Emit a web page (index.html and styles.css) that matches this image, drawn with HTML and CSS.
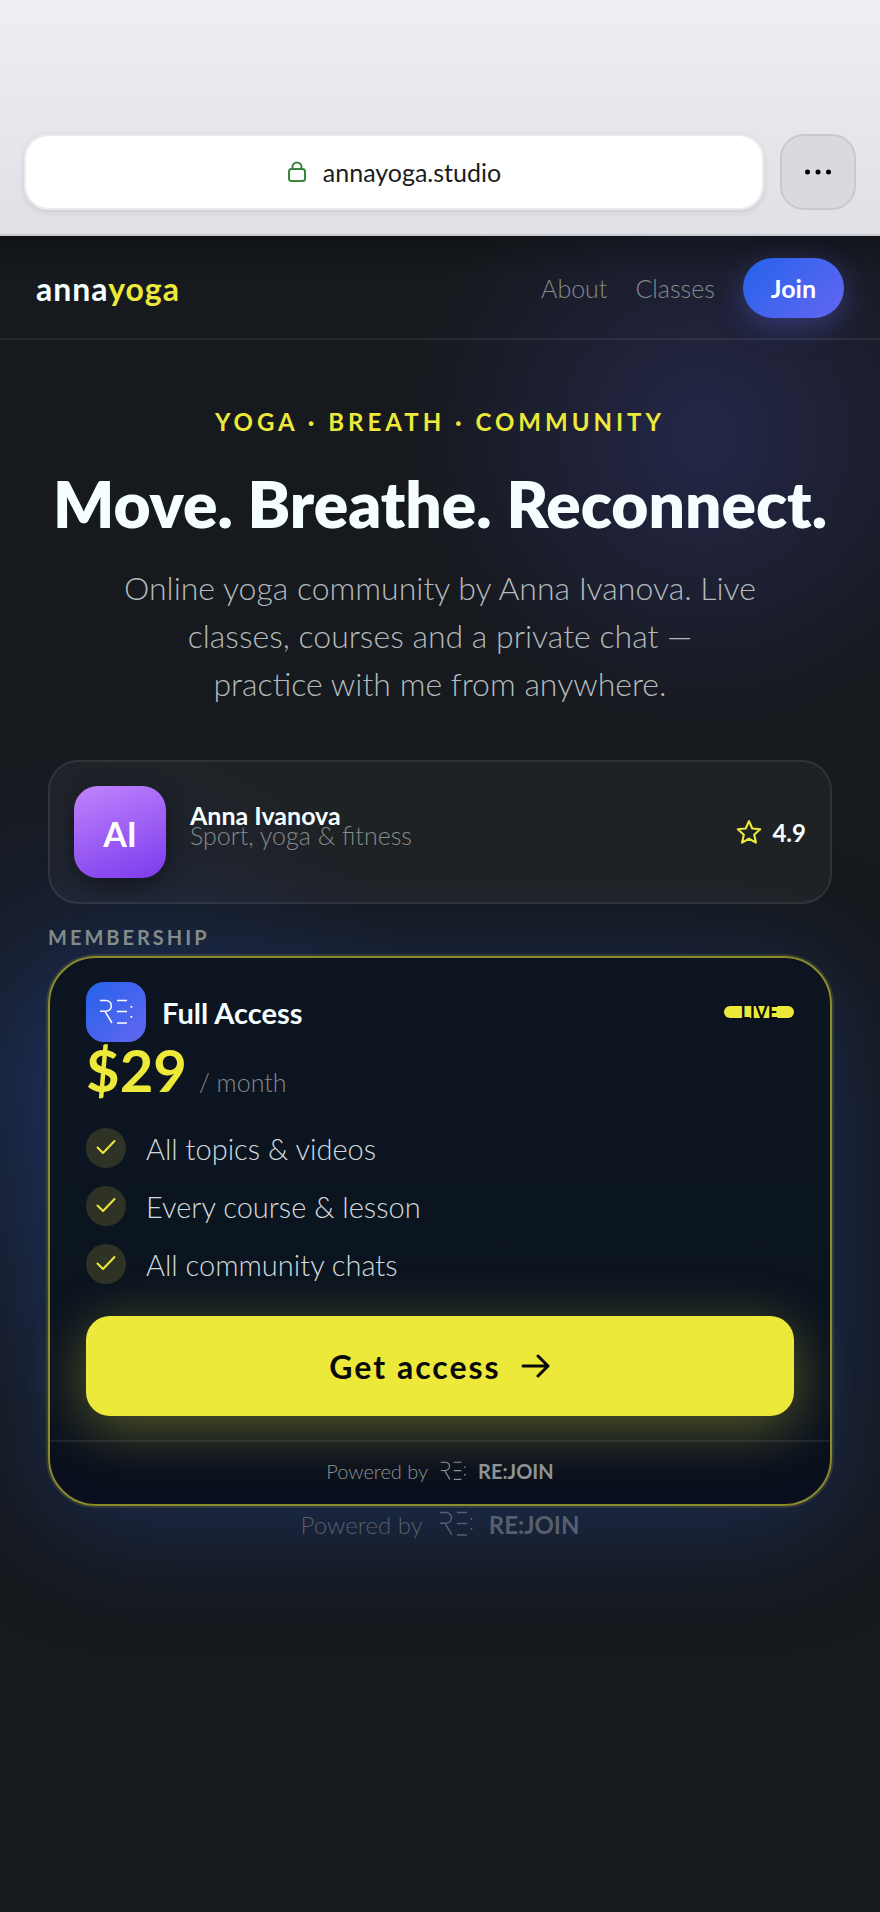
FILE: index.html
```html
<!DOCTYPE html>
<html lang="en">
<head>
  <meta charset="utf-8">
  <meta name="viewport" content="width=device-width, initial-scale=1">
  <title>Anna Yoga</title>
  <link rel="stylesheet" href="styles.css">
</head>
<body>
  <svg class="defs" aria-hidden="true">
    <symbol id="re-logo" viewBox="0 0 34 26">
      <path d="M1 1.5H7A5.4 5.4 0 0 1 7 12.3H1M6 12.3L13 24M18 1.5H28M18 12.5H28M18 24H28" fill="none" stroke="currentColor" stroke-width="1.5"/>
      <path d="M31.5 7h1.8v1.8h-1.8zM31.5 17h1.8v1.8h-1.8z" fill="currentColor"/>
    </symbol>
    <symbol id="check" viewBox="0 0 24 24">
      <path d="M3.500 11.500l5.500 5.500L20.500 5" fill="none" stroke="currentColor" stroke-width="2" stroke-linecap="round" stroke-linejoin="round"/>
    </symbol>
  </svg>

  <div class="browser-bar">
    <div class="address">
      <svg class="lock" viewBox="0 0 20 22" aria-hidden="true">
        <rect x="2" y="8" width="16" height="12" rx="2.500"/>
        <path d="M5.500 8V6a4.500 4.500 0 0 1 9 0v2"/>
      </svg>
      <span>annayoga.studio</span>
    </div>
    <button class="menu-button" aria-label="More">
      <svg viewBox="0 0 28 8" aria-hidden="true">
        <circle cx="3.500" cy="4" r="2.500"/><circle cx="14" cy="4" r="2.500"/><circle cx="24.500" cy="4" r="2.500"/>
      </svg>
    </button>
  </div>

  <div class="page">
    <header class="nav">
      <a class="brand" href="#">anna<span>yoga</span></a>
      <nav class="links">
        <a href="#about">About</a>
        <a href="#classes">Classes</a>
        <button class="join">Join</button>
      </nav>
    </header>

    <main class="content">
      <section class="hero">
        <p class="eyebrow">YOGA · BREATH · COMMUNITY</p>
        <h1>Move. Breathe. Reconnect.</h1>
        <p class="lead">Online yoga community by Anna Ivanova. Live classes, courses and a private chat —<br> practice with me from anywhere.</p>
      </section>

      <section class="author">
        <div class="avatar">AI</div>
        <div class="author-text">
          <p class="author-name">Anna Ivanova</p>
          <p class="author-topic">Sport, yoga &amp; fitness</p>
        </div>
        <div class="rating">
          <svg viewBox="0 0 24 24" aria-hidden="true">
            <path d="M12 2l3 6.800 7.300.7-5.500 5 1.600 7.300L12 18.200l-6.400 3.600 1.600-7.300-5.500-5 7.300-.7z"/>
          </svg>
          <span>4.9</span>
        </div>
      </section>

      <h2 class="label">MEMBERSHIP</h2>

      <section class="plan">
        <div class="plan-body">
          <div class="plan-head">
            <div class="plan-icon"><svg class="logo"><use href="#re-logo"/></svg></div>
            <h3>Full Access</h3>
            <span class="live">LIVE</span>
          </div>
          <div class="price"><strong>$29</strong><span>/ month</span></div>
          <ul class="features">
            <li><span class="tick"><svg><use href="#check"/></svg></span>All topics &amp; videos</li>
            <li><span class="tick"><svg><use href="#check"/></svg></span>Every course &amp; lesson</li>
            <li><span class="tick"><svg><use href="#check"/></svg></span>All community chats</li>
          </ul>
          <button class="access">
            Get access
            <svg viewBox="0 0 30 24" aria-hidden="true"><path d="M2 12h25M17 2l10 10-10 10"/></svg>
          </button>
        </div>
        <div class="powered">Powered by <svg class="logo logo-small"><use href="#re-logo"/></svg> <b>RE:JOIN</b></div>
      </section>

      <footer class="powered powered-page">Powered by <svg class="logo"><use href="#re-logo"/></svg> <b>RE:JOIN</b></footer>
    </main>
  </div>
</body>
</html>
```
FILE: styles.css
```css
* {
  box-sizing: border-box;
  margin: 0;
  padding: 0;
}

body {
  display: flex;
  flex-direction: column;
  min-height: 100vh;
  font-family: Lato, sans-serif;
  font-weight: 300;
  font-size: 25px;
  color: #f5ffff;
  background-color: #16191d;
}

a {
  color: inherit;
  text-decoration: none;
}

button {
  font: inherit;
  border: none;
  cursor: pointer;
}

.defs {
  position: absolute;
  width: 0;
  height: 0;
}

/* browser bar */
.browser-bar {
  display: flex;
  gap: 16px;
  padding: 134px 24px 24px;
  background: linear-gradient(#eeeff3, #e0e0e6);
  border-bottom: 2px solid #c9cacf;
}

.address {
  flex: 1;
  display: flex;
  align-items: center;
  justify-content: center;
  gap: 16px;
  height: 76px;
  border: 2px solid #ebebed;
  border-radius: 24px;
  background-color: white;
  background-clip: padding-box;
  box-shadow: 0 2px 6px rgba(0, 0, 0, 0.1);
  color: #1c1c1e;
  font-weight: 400;
}

.lock {
  width: 20px;
  height: 22px;
  fill: none;
  stroke: #3a843d;
  stroke-width: 2;
}

.menu-button {
  display: flex;
  align-items: center;
  justify-content: center;
  width: 76px;
  height: 76px;
  border: 2px solid #c9cace;
  border-radius: 24px;
  background-color: #d9dadf;
}

.menu-button svg {
  width: 28px;
  height: 8px;
}

/* page */
.page {
  flex: 1;
  background:
    linear-gradient(rgba(0, 0, 0, 0.25), transparent 40px),
    radial-gradient(circle 300px at 80% 200px, rgba(79, 80, 200, 0.25), transparent),
    radial-gradient(circle 340px at 10% 840px, rgba(37, 80, 180, 0.2), transparent);
}

.nav {
  display: flex;
  justify-content: space-between;
  align-items: center;
  padding: 22px 36px 20px;
  border-bottom: 2px solid rgba(255, 255, 255, 0.07);
}

.brand {
  font-size: 32px;
  font-weight: 700;
  letter-spacing: 1px;
}

.brand span {
  color: #ece93a;
}

.links {
  display: flex;
  align-items: center;
  gap: 28px;
  color: #838b8b;
}

.join {
  height: 60px;
  padding: 0 28px;
  border-radius: 30px;
  background: linear-gradient(135deg, #2563eb, #6366f1);
  box-shadow: 0 8px 28px rgba(99, 102, 241, 0.35);
  color: white;
  font-weight: 700;
}

.content {
  padding: 64px 48px;
}

.hero {
  margin-bottom: 52px;
  text-align: center;
}

.eyebrow {
  color: #ece93a;
  font-size: 24px;
  font-weight: 700;
  letter-spacing: 4px;
  line-height: 36px;
}

h1 {
  margin: 24px 0 20px;
  font-size: 64px;
  font-weight: 800;
  line-height: 80px;
}

.lead {
  max-width: 640px;
  margin: 0 auto;
  font-size: 32px;
  line-height: 48px;
  color: #b4babc;
}

.author {
  display: flex;
  align-items: center;
  gap: 24px;
  padding: 24px;
  border: 2px solid rgba(255, 255, 255, 0.08);
  border-radius: 30px;
  background-color: rgba(255, 255, 255, 0.04);
}

.avatar {
  width: 92px;
  height: 92px;
  border-radius: 24px;
  background: linear-gradient(160deg, #c084fc, #7c3aed);
  box-shadow: 0 8px 24px rgba(0, 0, 0, 0.4);
  color: white;
  font-size: 34px;
  font-weight: 700;
  line-height: 96px;
  text-align: center;
}

.author-text {
  flex: 1;
  padding-bottom: 14px;
  line-height: 20px;
}

.author-name {
  font-weight: 700;
}

.author-topic {
  color: #838b8b;
}

.rating {
  display: flex;
  align-items: center;
  gap: 10px;
  font-size: 24px;
  font-weight: 700;
}

.rating svg {
  width: 26px;
  height: 26px;
  fill: none;
  stroke: #ece93a;
  stroke-width: 2;
  stroke-linejoin: round;
}

.label {
  padding: 22px 0 8px;
  font-size: 20px;
  font-weight: 700;
  line-height: 22px;
  letter-spacing: 3px;
  color: #838b8b;
}

.plan {
  border: 2px solid #8b8a2d;
  border-radius: 48px;
  background: linear-gradient(#0c1420, #0b1520 50%, #0a0f1d);
  box-shadow:
    0 0 0 2px rgba(236, 233, 58, 0.12),
    0 16px 120px rgba(37, 80, 180, 0.4);
}

.plan-body {
  padding: 24px 36px;
}

.plan-head {
  display: flex;
  align-items: center;
  gap: 16px;
}

.plan-icon {
  display: flex;
  align-items: center;
  justify-content: center;
  width: 60px;
  height: 60px;
  border-radius: 18px;
  background: linear-gradient(135deg, #2563eb, #6366f1);
  color: white;
}

.logo {
  width: 34px;
  height: 26px;
}

.logo-small {
  width: 26px;
  height: 20px;
}

h3 {
  flex: 1;
  font-size: 29px;
  font-weight: 700;
}

.live {
  padding: 6px 16px;
  border-radius: 6px;
  background-color: #ece93a;
  color: #0a0a0a;
  font-size: 18px;
  font-weight: 700;
  line-height: 0;
}

.price {
  display: flex;
  align-items: baseline;
  gap: 12px;
  height: 86px;
  line-height: 56px;
  color: #838b8b;
}

.price strong {
  font-size: 58px;
  font-weight: 700;
  color: #ece93a;
}

.features {
  display: grid;
  gap: 18px;
  margin-bottom: 32px;
  list-style: none;
  font-size: 29px;
  color: #d2dadd;
}

.features li {
  display: flex;
  align-items: center;
  gap: 20px;
  height: 40px;
}

.tick {
  display: flex;
  align-items: center;
  justify-content: center;
  width: 40px;
  height: 40px;
  border-radius: 50%;
  background-color: #2e3326;
  color: #ece93a;
}

.tick svg {
  width: 24px;
  height: 24px;
}

.access {
  display: flex;
  align-items: center;
  justify-content: center;
  gap: 20px;
  width: 100%;
  height: 100px;
  border-radius: 24px;
  background-color: #ece93a;
  box-shadow: 0 12px 56px rgba(236, 233, 58, 0.35);
  color: #0a0a0a;
  font-size: 32px;
  font-weight: 700;
  letter-spacing: 2px;
}

.access svg {
  width: 30px;
  height: 24px;
  fill: none;
  stroke: currentColor;
  stroke-width: 3;
  stroke-linecap: round;
  stroke-linejoin: round;
}

.powered {
  display: flex;
  align-items: center;
  justify-content: center;
  gap: 12px;
  height: 64px;
  padding-bottom: 4px;
  border-top: 2px solid rgba(255, 255, 255, 0.07);
  font-size: 20px;
  color: #8d9494;
}

.powered b {
  font-weight: 700;
}

.powered-page {
  gap: 16px;
  height: 36px;
  padding: 0;
  border: none;
  font-size: 24px;
  color: #565f6b;
}
```
